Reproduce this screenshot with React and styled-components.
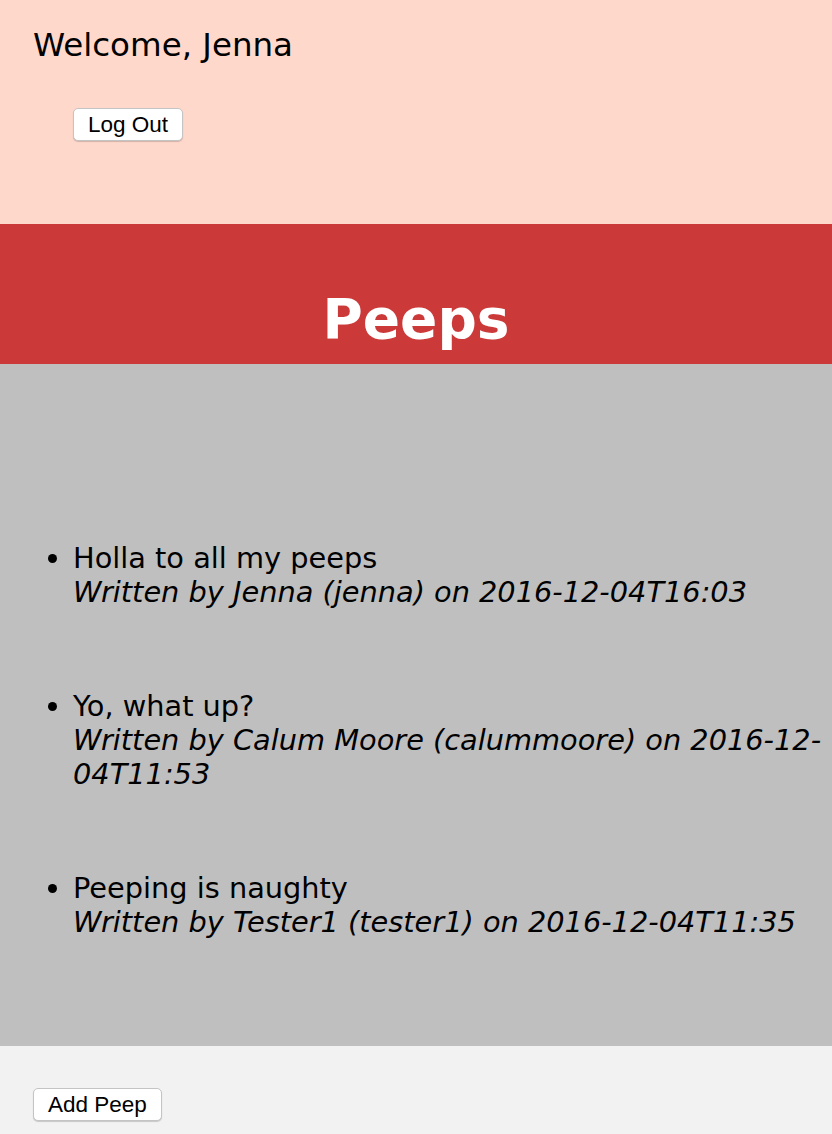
import React from "react";
import styled, { createGlobalStyle } from "styled-components";

const GlobalStyle = createGlobalStyle`
  html, body {
    margin: 0;
    padding: 0;
  }
  body {
    font-family: "DejaVu Sans", Verdana, sans-serif;
    color: #000;
    background: #f2f2f2;
  }
`;

const Header = styled.header`
  background: #ffd8cc;
  height: 224px;
  box-sizing: border-box;
  padding: 26px 33px 0;
`;

const Welcome = styled.div`
  font-size: 32.5px;
  line-height: normal;
`;

const HeaderActions = styled.div`
  margin-top: 44px;
  padding-left: 40px;
`;

const Button = styled.button`
  font-family: "Liberation Sans", Arial, sans-serif;
  font-size: 22.5px;
  line-height: 25px;
  color: #000;
  background: #fff;
  border: 1px solid #c4c4c4;
  border-radius: 5px;
  padding: 3px 14px;
  box-shadow: 0 1px 1px rgba(0, 0, 0, 0.18);
  cursor: pointer;
`;

const Banner = styled.div`
  background: #cb3939;
  height: 140px;
  box-sizing: border-box;
  padding-top: 63px;
  text-align: center;
`;

const Title = styled.h1`
  margin: 0;
  color: #fff;
  font-size: 55px;
  font-weight: bold;
  line-height: normal;
`;

const Feed = styled.section`
  background: #bfbfbf;
  padding: 177px 0 107px 33px;
`;

const List = styled.ul`
  margin: 0;
  padding-left: 40px;
  font-size: 28.8px;
  line-height: normal;

  li + li {
    margin-top: 80px;
  }
`;

const Byline = styled.div`
  font-style: italic;
`;

const Footer = styled.footer`
  background: #f2f2f2;
  padding: 42px 33px 13px;
`;

const peeps = [
  {
    text: "Holla to all my peeps",
    name: "Jenna",
    user: "jenna",
    time: "2016-12-04T16:03",
  },
  {
    text: "Yo, what up?",
    name: "Calum Moore",
    user: "calummoore",
    time: "2016-12-04T11:53",
  },
  {
    text: "Peeping is naughty",
    name: "Tester1",
    user: "tester1",
    time: "2016-12-04T11:35",
  },
];

export default function App() {
  return (
    <>
      <GlobalStyle />
      <Header>
        <Welcome>Welcome, Jenna</Welcome>
        <HeaderActions>
          <Button>Log Out</Button>
        </HeaderActions>
      </Header>
      <Banner>
        <Title>Peeps</Title>
      </Banner>
      <Feed>
        <List>
          {peeps.map((p, i) => (
            <li key={i}>
              {p.text}
              <Byline>
                Written by {p.name} ({p.user}) on {p.time}
              </Byline>
            </li>
          ))}
        </List>
      </Feed>
      <Footer>
        <Button>Add Peep</Button>
      </Footer>
    </>
  );
}
